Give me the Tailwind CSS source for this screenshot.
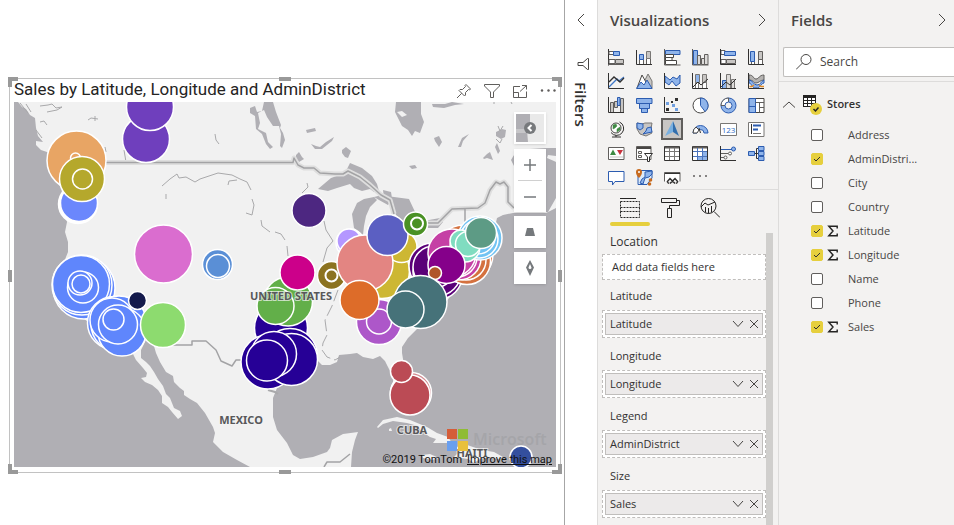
<!DOCTYPE html>
<html lang="en">
<head>
<meta charset="utf-8">
<meta name="viewport" content="width=device-width, initial-scale=1">
<title>Sales report</title>
<script src="https://cdn.jsdelivr.net/npm/@tailwindcss/browser@4"></script>
</head>
<body class="flex h-screen overflow-hidden bg-white font-['Open_Sans','Noto_Sans',sans-serif] text-xs text-[#323130]">

<svg class="absolute h-0 w-0" aria-hidden="true">
  <symbol id="down" viewBox="0 0 16 16"><path d="M3 5 8 10.500 13 5" fill="none" stroke="#484644"/></symbol>
  <symbol id="close" viewBox="0 0 16 16"><path d="M4 4 12 12M12 4 4 12" fill="none" stroke="#484644"/></symbol>
  <symbol id="tick" viewBox="0 0 12 12"><path d="M3 6 5 8 9 4" fill="none" stroke="#323130"/></symbol>
  <symbol id="sigma" viewBox="0 0 10 10"><path d="M8.500 3V1H1.500L5 5 1.500 9H8.500V7" fill="none" stroke="#252423" stroke-width="1.200"/></symbol>
</svg>

<main class="min-w-0 flex-1 border-r border-[#a6a6a6] pt-[78px] pr-[3px] pl-[9px]">
  <section class="relative border border-[#c2c2c2] px-1 pb-[5px]">
    <span class="absolute -top-0.5 -left-0.5 h-2.5 w-2.5 border-t-4 border-l-4 border-[#999]"></span>
    <span class="absolute -top-0.5 -right-0.5 h-2.5 w-2.5 border-t-4 border-r-4 border-[#999]"></span>
    <span class="absolute -bottom-0.5 -left-0.5 h-2.5 w-2.5 border-b-4 border-l-4 border-[#999]"></span>
    <span class="absolute -right-0.5 -bottom-0.5 h-2.5 w-2.5 border-r-4 border-b-4 border-[#999]"></span>
    <span class="absolute -top-0.5 left-1/2 h-1 w-3 -translate-x-1/2 bg-[#999]"></span>
    <span class="absolute -bottom-0.5 left-1/2 h-1 w-3 -translate-x-1/2 bg-[#999]"></span>
    <span class="absolute top-1/2 -left-0.5 h-3 w-1 -translate-y-1/2 bg-[#999]"></span>
    <span class="absolute top-1/2 -right-0.5 h-3 w-1 -translate-y-1/2 bg-[#999]"></span>

    <header class="flex h-[23px] items-center">
      <h1 class="min-w-0 flex-1 truncate pb-1 font-[Roboto,sans-serif] text-[17px] leading-5 text-[#252423]">Sales by Latitude, Longitude and AdminDistrict</h1>
      <div class="flex items-center gap-3 text-[#605e5c]">
        <button aria-label="Pin visual" class="block"><svg class="h-4 w-4" viewBox="0 0 16 16" fill="none" stroke="currentColor"><path d="M10 1.500 14.500 6 13.500 7 12.500 6.500 9.500 9.500 9.500 12 8.500 13 3 7.500 4 6.500 6.500 6.500 9.500 3.500 9 2.500ZM5.700 10.300 1 15"/></svg></button>
        <button aria-label="Filters on visual" class="block"><svg class="h-4 w-4" viewBox="0 0 16 16" fill="none" stroke="currentColor"><path d="M.5 1.500H15.500V3L9.500 9V14.500H6.500V9L.5 3Z"/></svg></button>
        <button aria-label="Focus mode" class="block"><svg class="h-4 w-4" viewBox="0 0 16 16" fill="none" stroke="currentColor"><path d="M8 3.500H1.500V14.500H14.500V8.500M1.500 9.500H6.500V14.500M10 2.500H14.500V6.500M14.500 2.500 8 8.500"/></svg></button>
        <button aria-label="More options" class="block"><svg class="h-4 w-4" viewBox="0 0 16 16" fill="currentColor"><circle cx="2" cy="7.500" r="1.200"/><circle cx="8.500" cy="7.500" r="1.200"/><circle cx="14.500" cy="7.500" r="1.200"/></svg></button>
      </div>
    </header>

    <div class="relative">
      <svg class="block w-full" viewBox="14 102 542 365" role="img" aria-label="Map of sales in North America">
        <rect x="14" y="102" width="542" height="365" fill="#f1f1f1"/>
        <g fill="#b0afb4">
          <path d="M14 102H18L22 107 26 109 30 115 35 118 36 128 38 136 43 142 36 141 36 145 41 150 47 152 60 164 62 195 67 222 65 232 68 242 68 252 64 262 60 290 80 316 120 345 133 354 136 360 143 368 147 373 146 377 141 378 145 382 152 385 158 390 162 396 162 403 168 407 172 412 178 419 182 416 180 411 174 408 170 398 166 394 163 386 158 379 154 372 150 366 146 362 141 358 141 350 146 340 154 346 156 353 160 362 166 372 173 376 174 382 180 388 184 391 184 395 190 399 197 403 205 413 213 427 215 433 213 442 223 452 237 460 250 467H14Z"/>
          <path d="M277 388 291 375 317 360 322 365 330 365 337 362 339 355 350 354 357 353 363 357 373 359 380 356 385 361 388 367 392 375 396 395 410 413 416 410 414 392 404 365 402 353 402 347 408 338 417 329 440 310 455 290 470 275 486 262 492 240 497 218 503 215 513 213 546 213 556 208V467H351L352 452 355 440 358 432 343 434 332 440 330 448 327 452 313 457 300 459 293 455 287 443 277 430 273 417 273 398Z"/>
          <path d="M514 150 546 148H556V156L548 155 547 158 554 161 556 162V198L548 212H514ZM511 160 514 155V166Z"/>
          <path d="M250 108 255 106 257 112 262 111 264 102H273L276 112 281 125 280 128 283 133 285 140 282 148 280 146 281 134 279 126 273 126 267 117 264 110 258 113 260 123 258 129 266 133 268 142 273 147 270 149 266 144 262 134 256 129 255 116 250 113Z"/>
          <path d="M306 130 315 128 316 131 307 133ZM311 144 316 146 320 147 326 142 334 137 332 141 322 149 315 149ZM342 150 346 147 351 151 348 158 345 157 342 153ZM296 155 299 152 302 157 304 159 299 162 296 159Z"/>
          <path d="M318 189 331 178 345 173 350 163 362 168 372 176 377 184 379 191 374 192 370 189 362 191 354 188 350 184 337 188 328 191ZM352 214 357 203 364 199 374 197 377 200 370 207 366 216 364 226 363 235 354 228ZM374 197 382 195 394 197 409 199 416 214 404 222 396 215 392 200 388 205 379 200ZM383 190 391 192 392 198 384 198ZM424 223 429 220 440 218 443 222 438 228 428 228ZM400 208 406 211 409 224 402 220Z"/>
          <path d="M396 102H421V114L424 122 420 133 415 131 412 136 408 130 402 126 395 112ZM432 104 445 104 452 102 464 104 455 105 444 108 433 107ZM458 147 462 138 469 134 463 141 461 147ZM496 132 502 129 506 130 505 137 501 139 496 136ZM495 147 497 143 500 151 498 154ZM483 158 487 154 490 152 493 160 487 158 484 159ZM409 166 415 165 417 168 412 169ZM434 138 439 136 442 142 439 147 435 141Z"/>
        </g>
        <path d="M397 112 402 111 407 115 402 117Z" fill="#f1f1f1"/>
        <g fill="#f1f1f1">
          <path d="M377 427 383 420 397 417 410 420 427 427 437 433 448 437 452 443 433 443 436 439 430 437 421 431 418 426 407 423 393 421 383 424 378 428ZM389 429 391 428 392 431 389 431ZM456 448 462 443 470 446 482 450 494 452 503 457 498 459 489 457 480 459 474 463 468 459 454 457 458 453ZM422 455 430 454 439 458 432 460 423 458Z"/>
        </g>
        <g fill="none" stroke="#a9a9ab" stroke-width="1">
          <path d="M40 106 48 105 52 104 56 108 62 107 57 110 47 112M40 122 44 121 47 125M36 130 42 138M88 120 91 118 98 119M95 116 95 121M124 150 126 162M105 147 106 152M162 186 170 179 177 174 179 178 186 177 195 182 200 179 206 177 218 173 232 175 240 179 247 182 251 190M228 185 229 181 237 180M166 194 166 199M252 199 254 205 252 215 246 213M261 220 262 226 270 232M275 232 281 234 285 240M287 246 288 256M307 183 308 187 302 193M324 221 326 230 333 241 327 248 323 262M215 134 216 140 219 144M20 103 28 113M26 104 31 112M498 126 500 131 503 126M496 139 500 143 502 139M494 102V104M511 102 512 104"/>
          <path d="M338 290 332 306 325 320 327 335 323 343 322 350 327 357 335 360 340 357" stroke-dasharray="12 4"/>
          <path d="M268 390 275 392 278 394" stroke-width="2"/>
        </g>
        <g fill="none" stroke-linejoin="round">
          <path stroke="#dedede" stroke-width="5" d="M100 162.500H293L294 158 298 165 304 168 314 168 320 173 335 174 343 174 348 171 360 177 370 185 381 195 390 200 394 214M428 223H438L452 209 478 208 485 203 490 190 496 182 500 184 504 182 508 187 508 202 514 208"/>
          <g stroke="#a3a3a5" stroke-width="1.500">
            <path d="M100 162.500H293L294 158 298 165 304 168 314 168 320 173 335 174 343 174 348 171 360 177 370 185 381 195 390 200 394 214M428 223H438L452 209 478 208 485 203 490 190 496 182 500 184 504 182 508 187 508 202 514 208M465 209V222"/>
            <path d="M170 345H192V341H206L216 350 221 361 232 366 236 360H242M324 467 327 462 340 462 350 454"/>
          </g>
        </g>

        <g stroke="#fff" stroke-width="1.500">
          <circle cx="146" cy="139" r="23.500" fill="#6f3fbd"/>
          <circle cx="150" cy="107" r="23.500" fill="#6f3fbd"/>
          <circle cx="78" cy="204" r="19.500" fill="#fff"/>
          <circle cx="79" cy="203" r="18.500" fill="#6b87fc"/>
          <circle cx="76.500" cy="160.500" r="29.500" fill="#e8a564"/>
          <circle cx="75.500" cy="158" r="5" fill="#e8a564"/>
          <circle cx="82" cy="179" r="22.500" fill="#b5a82c"/>
          <circle cx="82.500" cy="179" r="10" fill="#b5a82c"/>
          <circle cx="163.500" cy="254" r="29" fill="#da6dcf"/>
          <g fill="#5f86fc">
            <circle cx="84" cy="288" r="31"/><circle cx="82" cy="285" r="30"/><circle cx="81" cy="284" r="28.500"/>
            <circle cx="83" cy="287.500" r="15.500"/><circle cx="80" cy="283" r="12"/><circle cx="81" cy="284" r="9"/>
            <circle cx="114" cy="323" r="26.500"/><circle cx="119" cy="324" r="28"/><circle cx="122" cy="332" r="24"/><circle cx="112" cy="320" r="22"/>
            <circle cx="118" cy="324.500" r="19.500"/><circle cx="113.500" cy="319.500" r="10.500"/>
          </g>
          <circle cx="137.500" cy="300.500" r="9" fill="#141a4c"/>
          <circle cx="163" cy="325" r="22.500" fill="#8ddb6f"/>
          <circle cx="217.500" cy="264.500" r="15" fill="#5a8fd6"/>
          <circle cx="218" cy="266" r="11.500" fill="#5a8fd6"/>
          <circle cx="309" cy="210.500" r="17" fill="#4d2781"/>
          <g fill="#260096">
            <circle cx="281" cy="328" r="26.500"/><circle cx="290" cy="356" r="27.500"/><circle cx="268" cy="362" r="27"/><circle cx="291.500" cy="359.500" r="26"/>
            <circle cx="274" cy="354" r="22.500"/><circle cx="267" cy="360.500" r="20.500"/>
          </g>
          <circle cx="288" cy="301.500" r="24.500" fill="#62af49"/>
          <circle cx="275.500" cy="306" r="18.500" fill="#62af49"/>
          <circle cx="297.500" cy="272.500" r="17.500" fill="#cc008a"/>
          <circle cx="331.500" cy="275.500" r="14" fill="#8c7320"/>
          <circle cx="331.500" cy="275.500" r="6" fill="#8c7320" stroke-width="2"/>
          <circle cx="350" cy="243" r="14" fill="#d5c5ff"/>
          <circle cx="349" cy="241" r="12" fill="#b497ff"/>
          <circle cx="382" cy="271" r="27.500" fill="#cdb733"/>
          <circle cx="401.500" cy="247" r="15.500" fill="#cdb733"/>
          <circle cx="365" cy="263" r="28" fill="#e38582"/>
          <circle cx="387.500" cy="235" r="20.500" fill="#5b5fc2"/>
          <circle cx="415.500" cy="224" r="12" fill="#4a9125"/>
          <circle cx="417" cy="223.500" r="6" fill="#4a9125" stroke-width="2"/>
          <g fill="#5a0078">
            <circle cx="432" cy="266" r="23"/><circle cx="439" cy="276" r="23"/><circle cx="437" cy="272" r="24"/><circle cx="434" cy="267" r="21"/>
          </g>
          <g fill="#d4713f">
            <circle cx="464" cy="254" r="29"/><circle cx="467" cy="261" r="23.500"/><circle cx="466" cy="260" r="20"/>
          </g>
          <g fill="#c540a5">
            <circle cx="459" cy="258" r="22"/><circle cx="457" cy="257" r="20"/><circle cx="452" cy="253" r="24"/>
          </g>
          <g fill="#72c3f3">
            <circle cx="480" cy="238" r="22"/><circle cx="479" cy="239" r="19"/><circle cx="478" cy="237" r="17"/>
          </g>
          <g fill="#80dcc0">
            <circle cx="465" cy="247" r="15"/><circle cx="461" cy="241" r="11"/><circle cx="468" cy="244" r="12.500"/>
          </g>
          <circle cx="481" cy="233" r="15.500" fill="#5d9b85"/>
          <circle cx="446.500" cy="265" r="18.500" fill="#85008a"/>
          <circle cx="435" cy="273" r="6.500" fill="#b0562a"/>
          <circle cx="379" cy="322" r="22.500" fill="#ad57c9"/>
          <circle cx="379" cy="321.500" r="12.500" fill="#ad57c9"/>
          <circle cx="359.500" cy="300" r="19.500" fill="#dd6c29"/>
          <circle cx="420.500" cy="302" r="26.500" fill="#467279"/>
          <circle cx="405.500" cy="309.500" r="18.500" fill="#467279"/>
          <circle cx="411" cy="393" r="20.500" fill="#d48a91"/>
          <circle cx="410" cy="395" r="20" fill="#bb4b55"/>
          <circle cx="401.500" cy="371.500" r="11" fill="#bb4b55"/>
          <circle cx="521" cy="457" r="11" fill="#344f9e"/>
        </g>

        <g class="font-['Noto_Sans','Open_Sans',sans-serif] font-bold" font-size="11" fill="#58585a" stroke="#f4f4f4" stroke-opacity="0.7" stroke-width="2" paint-order="stroke" text-anchor="middle">
          <text x="291" y="300">UNITED STATES</text>
          <text x="241" y="424">MEXICO</text>
          <text x="412" y="434">CUBA</text>
          <text x="472" y="457">HAITI</text>
        </g>
        <path d="M447 429H457V439H447Z" fill="#d55c38"/><path d="M458 429H468V439H458Z" fill="#8fbc34"/>
        <path d="M447 441H457V451H447Z" fill="#699ff0"/><path d="M458 441H468V451H458Z" fill="#e9c03c"/>
        <text x="473" y="445" class="font-['Open_Sans',sans-serif] font-semibold" font-size="16" fill="#a5a5a9">Microsoft</text>
      </svg>

      <div class="absolute top-2.5 right-2.5 flex w-8 flex-col gap-1 text-[#75797c]">
        <button aria-label="Map style" class="mb-px h-8 border-2 border-white bg-[#e9e9e9] shadow">
          <svg class="h-full w-full" viewBox="0 0 28 28"><path d="M0 0H14V10L11 16 12 28H0Z" fill="#b0afb4"/><path d="M0 16H12M0 18H12" stroke="#ddd"/><circle cx="14" cy="14" r="6" fill="#77797c"/><path d="M15.500 11 12.500 14 15.500 17" fill="none" stroke="#fff" stroke-width="2"/></svg>
        </button>
        <div class="bg-white shadow">
          <button aria-label="Zoom in" class="flex h-[31px] w-full items-center justify-center"><svg class="h-4 w-4" viewBox="0 0 16 16" stroke="currentColor" stroke-width="1.500"><path d="M2 8H14M8 2V14"/></svg></button>
          <div class="mx-1 border-t border-[#d0d0d0]"></div>
          <button aria-label="Zoom out" class="flex h-[31px] w-full items-center justify-center"><svg class="h-4 w-4" viewBox="0 0 16 16" stroke="currentColor" stroke-width="1.500"><path d="M2 8H14"/></svg></button>
        </div>
        <button aria-label="Tilt map" class="flex h-8 items-center justify-center bg-white shadow"><svg class="h-4 w-4" viewBox="0 0 16 16" fill="currentColor"><path d="M5 4H11L13 12H3Z"/></svg></button>
        <button aria-label="Rotate map" class="flex h-8 items-center justify-center bg-white shadow"><svg class="h-4 w-4" viewBox="0 0 16 16" fill="currentColor"><path fill-rule="evenodd" d="M8 0 12 7.500 8 16 4 7.500ZM8 4 6.500 7.500A1.500 1.500 0 0 0 9.500 7.500Z"/></svg></button>
      </div>

      <p class="absolute right-1 -bottom-px font-[Roboto,sans-serif] text-[11px] leading-4 text-[#111]">©2019 TomTom <a href="#" class="ml-0.5 underline">Improve this map</a></p>
    </div>
  </section>
</main>

<aside aria-label="Filters" class="flex w-8 shrink-0 flex-col items-center">
  <button aria-label="Expand filters" class="mt-3"><svg class="h-4 w-4" viewBox="0 0 16 16" fill="none" stroke="#484644"><path d="M11 2 5 8 11 14"/></svg></button>
  <svg class="mt-7 ml-1 h-4 w-4" viewBox="0 0 16 16" fill="none" stroke="#484644"><path d="M13.500 2.500V13.500H12.500L8 9.500H3V6.500H8L12.500 2.500Z"/></svg>
  <h2 class="mt-2.5 text-[15px] leading-5 font-semibold [writing-mode:vertical-rl]">Filters</h2>
</aside>

<aside aria-label="Visualizations" class="flex w-[182px] shrink-0 flex-col border-x border-[#dddcdb] bg-[#f3f2f1]">
  <header class="flex h-10 shrink-0 items-center justify-between pr-2 pl-3">
    <h2 class="text-[15px] font-semibold text-[#484644]">Visualizations</h2>
    <button aria-label="Collapse visualizations"><svg class="h-4 w-4" viewBox="0 0 16 16" fill="none" stroke="#484644"><path d="M5 2 11 8 5 14"/></svg></button>
  </header>

  <div class="grid shrink-0 grid-cols-[repeat(6,28px)] auto-rows-[24px] border-b border-[#dddcdb] pt-[5px] pl-1">
    <button aria-label="Stacked bar chart" class="grid place-items-center"><svg width="17" height="17" viewBox="0 0 17 17" fill="none"><path d="M.5 0V16.500" stroke="#323130"/><path d="M1 2.500H6V5.500H1ZM1 10.500H7V14.500H1Z" fill="#fff" stroke="#605e5c"/><path d="M5.500 2.500H11.500V6.500H5.500Z" fill="#8fb4ea" stroke="#2c5cb0"/><path d="M7.500 10.500H15.500V14.500H7.500Z" fill="#c8c6c4" stroke="#605e5c"/><path d="M0 15.500H16" stroke="#605e5c"/></svg></button>
    <button aria-label="Stacked column chart" class="grid place-items-center"><svg width="17" height="17" viewBox="0 0 17 17"><path d="M3.500 10.500H7.500V15.500H3.500ZM10.500 9.500H14.500V15.500H10.500Z" fill="#fff" stroke="#605e5c"/><path d="M3.500 5.500H7.500V10.500H3.500Z" fill="#8fb4ea" stroke="#2c5cb0"/><path d="M10.500 2.500H14.500V9.500H10.500Z" fill="#c8c6c4" stroke="#797775"/><path d="M.5 1V15.500H16" fill="none" stroke="#323130"/></svg></button>
    <button aria-label="Clustered bar chart" class="grid place-items-center"><svg width="17" height="17" viewBox="0 0 17 17"><path d="M1.500 1.500H16V5.500H1.500Z" fill="#8fb4ea" stroke="#2c5cb0"/><path d="M1.500 5.500H9.500V8.500H1.500ZM1.500 8.500H8V11.500H1.500ZM1.500 11.500H12.500V15.500H1.500Z" fill="#fff" stroke="#484644"/><path d="M.5 0V16H16.500" fill="none" stroke="#605e5c"/></svg></button>
    <button aria-label="Clustered column chart" class="grid place-items-center"><svg width="17" height="17" viewBox="0 0 17 17"><path d="M1.500 1.500H5.500V15.500H1.500Z" fill="#8fb4ea" stroke="#2c5cb0"/><path d="M5.500 6.500H8.500V15.500H5.500ZM9.500 9.500H12.500V15.500H9.500ZM12.500 5.500H16V15.500H12.500Z" fill="#dddbd9" stroke="#605e5c"/><path d="M.5 0V16H16.500" fill="none" stroke="#605e5c"/></svg></button>
    <button aria-label="100% stacked bar chart" class="grid place-items-center"><svg width="17" height="17" viewBox="0 0 17 17"><path d="M1 1.500H5V5.500H1ZM1 10.500H6V14.500H1Z" fill="#fff" stroke="#605e5c"/><path d="M4.500 2.500H15.500V6.500H4.500Z" fill="#8fb4ea" stroke="#2c5cb0"/><path d="M6.500 10.500H15.500V14.500H6.500Z" fill="#c8c6c4" stroke="#605e5c"/><path d="M.5 0V15.500H16" fill="none" stroke="#323130"/></svg></button>
    <button aria-label="100% stacked column chart" class="grid place-items-center"><svg width="17" height="17" viewBox="0 0 17 17"><path d="M3.500 12.500H6.500V15.500H3.500ZM10.500 9.500H14.500V15.500H10.500Z" fill="#fff" stroke="#605e5c"/><path d="M2.500 2.500H6.500V12.500H2.500Z" fill="#8fb4ea" stroke="#2c5cb0"/><path d="M10.500 2.500H14.500V10.500H10.500Z" fill="#c8c6c4" stroke="#605e5c"/><path d="M.5 0V15.500H16" fill="none" stroke="#323130"/></svg></button>

    <button aria-label="Line chart" class="grid place-items-center"><svg width="17" height="17" viewBox="0 0 17 17" fill="none"><path d="M1 14 9 6 11 8 16 4" stroke="#3f78c8" stroke-width="1.300"/><path d="M1 9 6 4 12 9 16 5" stroke="#323130" stroke-width="1.300"/><path d="M.5 0V15.500H16" stroke="#323130"/></svg></button>
    <button aria-label="Area chart" class="grid place-items-center"><svg width="17" height="17" viewBox="0 0 17 17"><path d="M7 11 12 1 16 8V15.500Z" fill="#c8c6c4" stroke="#797775"/><path d="M1 15 6 2 11 11Z" fill="#fff" stroke="#484644"/><path d="M.5 15.500 5 9 8 12 11 7 16 15.500Z" fill="#8fb4ea" stroke="#2c5cb0"/></svg></button>
    <button aria-label="Stacked area chart" class="grid place-items-center"><svg width="17" height="17" viewBox="0 0 17 17"><path d="M1 3 6 7 9 4 13 6 16 2V10L12 13 8 8 5 12 1 9Z" fill="#8fb4ea" stroke="#2c5cb0"/><path d="M.5 0V15.500H16" fill="none" stroke="#323130"/></svg></button>
    <button aria-label="Line and stacked column chart" class="grid place-items-center"><svg width="17" height="17" viewBox="0 0 17 17"><path d="M3.500 9.500H6.500V15.500H3.500ZM10.500 9.500H14.500V15.500H10.500Z" fill="#fff" stroke="#797775"/><path d="M3.500 1.500H7.500V9.500H3.500Z" fill="#8fb4ea" stroke="#797775"/><path d="M10.500 1.500H14.500V9.500H10.500Z" fill="#c8c6c4" stroke="#797775"/><path d="M1 14 6 9 9 12 16 6M.5 0V15.500H16" fill="none" stroke="#323130"/></svg></button>
    <button aria-label="Line and clustered column chart" class="grid place-items-center"><svg width="17" height="17" viewBox="0 0 17 17"><path d="M2.500 7.500H6.500V15.500H2.500Z" fill="#8fb4ea" stroke="#2c5cb0"/><path d="M6.500 1.500H10.500V15.500H6.500ZM11.500 6.500H14.500V15.500H11.500Z" fill="#dddbd9" stroke="#797775"/><path d="M1 14 6 9 10 12 16 6M.5 0V15.500H16" fill="none" stroke="#323130"/></svg></button>
    <button aria-label="Ribbon chart" class="grid place-items-center"><svg width="17" height="17" viewBox="0 0 17 17"><path d="M1 2C6 2 5 6 8 6S11 2 16 2V7C12 7 11 10 8 10S6 7 1 7Z" fill="#b5b3b1" stroke="#605e5c"/><path d="M1 7C5 7 5 12 9 12S13 8 16 7V10C12 11 13 15 8 15S4 10 1 10Z" fill="#8fb4ea" stroke="#2c5cb0"/><path d="M1.500 13.500H4L6 12M16 13.500H13L11 12" fill="none" stroke="#e08b2a" stroke-width="1.500"/><path d="M.5 0V15.500H16" fill="none" stroke="#323130"/></svg></button>

    <button aria-label="Waterfall chart" class="grid place-items-center"><svg width="17" height="17" viewBox="0 0 17 17"><path d="M2.500 5.500H5.500V15.500H2.500Z" fill="#c8c6c4" stroke="#605e5c"/><path d="M6.500 4.500H9.500V10.500H6.500ZM12.500 1.500H15.500V15.500H12.500Z" fill="#c8c6c4" stroke="#605e5c"/><path d="M9.500 .5H12V8.500H9.500Z" fill="#8fb4ea" stroke="#2c5cb0"/><path d="M.5 0V15.500H16" fill="none" stroke="#323130"/></svg></button>
    <button aria-label="Funnel" class="grid place-items-center"><svg width="17" height="17" viewBox="0 0 17 17" fill="#8fb4ea" stroke="#2c5cb0"><path d="M.5 1.500H16V6.500H.5ZM3.500 6.500H13.500V11.500H3.500ZM5.500 11.500H11.500V15.500H5.500Z"/></svg></button>
    <button aria-label="Scatter chart" class="grid place-items-center"><svg width="17" height="17" viewBox="0 0 17 17"><path d="M11 1H14V4H11ZM2 11H5V14H2ZM7 4H9V6H7Z" fill="#323130"/><path d="M2 5H5V8H2ZM8 7H11V10H8ZM11 11H14V14H11Z" fill="#6f9fe0"/><path d="M.5 0V15.500H16" fill="none" stroke="#323130"/></svg></button>
    <button aria-label="Pie chart" class="grid place-items-center"><svg width="17" height="17" viewBox="0 0 17 17"><circle cx="8.500" cy="8.500" r="7.500" fill="#fff" stroke="#484644"/><path d="M8.500 1A7.500 7.500 0 0 1 13 14.500L8.500 8.500Z" fill="#8fb4ea" stroke="#2c5cb0"/></svg></button>
    <button aria-label="Donut chart" class="grid place-items-center"><svg width="17" height="17" viewBox="0 0 17 17"><circle cx="8.500" cy="8.500" r="7.500" fill="#8fb4ea" stroke="#2c5cb0"/><path d="M8.500 1A7.500 7.500 0 0 0 1 8.500H5L8.500 5Z" fill="#fff" stroke="#605e5c"/><circle cx="8.500" cy="8.500" r="3.500" fill="#f3f2f1" stroke="#2c5cb0"/></svg></button>
    <button aria-label="Treemap" class="grid place-items-center"><svg width="17" height="17" viewBox="0 0 17 17"><path d="M1 1.500H16V15.500H1Z" fill="#fff" stroke="#484644"/><path d="M1 1.500H7.500V15.500H1Z" fill="#8fb4ea" stroke="#2c5cb0"/><path d="M1 9.500H7.500" stroke="#2c5cb0"/><path d="M7.500 5.500H16M11.500 5.500V15.500M11.500 10.500H16" stroke="#605e5c"/></svg></button>

    <button aria-label="Map" class="grid place-items-center"><svg width="17" height="17" viewBox="0 0 17 17" fill="none"><circle cx="8" cy="7" r="5" fill="#fff" stroke="#484644"/><path d="M5 4 8 3 9 5 7 7 5 8ZM9 8 12 6 12 9 9 11Z" fill="#3f8a43" stroke="#3f8a43" stroke-width=".5"/><path d="M11.500 1A7 7 0 1 1 3 11.500M8 14V16M4 16H13" stroke="#323130"/></svg></button>
    <button aria-label="Filled map" class="grid place-items-center"><svg width="17" height="17" viewBox="0 0 17 17"><path d="M1 2 6 3 9 2 16 2 15 8 16 12 10 15 4 13 1 8Z" fill="#c8c6c4" stroke="#797775"/><path d="M1 2 7 3 7 7 4 9 1 7ZM11 7 15 6 16 11 11 12 7 13 10 10Z" fill="#8fb4ea" stroke="#2c5cb0"/></svg></button>
    <button aria-label="ArcGIS map" class="grid h-[22px] w-[22px] place-items-center place-self-center border-2 border-[#605e5c] bg-[#c8c6c4]"><svg width="16" height="16" viewBox="0 0 16 16"><path d="M9 0 1 15 9 11Z" fill="#79b0e0"/><path d="M9 0 15 15 9 11Z" fill="#336fad"/></svg></button>
    <button aria-label="Gauge" class="grid place-items-center"><svg width="17" height="17" viewBox="0 0 17 17"><path d="M1 12A7.500 7.500 0 0 1 16 12H12A3.500 3.500 0 0 0 5 12Z" fill="#8fb4ea" stroke="#2c5cb0"/><path d="M1 12A7.500 7.500 0 0 1 4 6L7 9 5 12Z" fill="#fff" stroke="#484644"/><path d="M8.500 12 7 7" stroke="#323130"/></svg></button>
    <button aria-label="Card" class="grid place-items-center"><svg width="17" height="17" viewBox="0 0 17 17"><path d="M.5 2.500H16.500V14.500H.5Z" fill="#fff" stroke="#797775"/><text x="8.500" y="11.500" font-size="8" text-anchor="middle" fill="#2f6bc4">123</text></svg></button>
    <button aria-label="Multi-row card" class="grid place-items-center"><svg width="17" height="17" viewBox="0 0 17 17"><path d="M.5 1.500H16V15.500H.5Z" fill="#fff" stroke="#797775"/><path d="M3.500 3V13" stroke="#323130"/><path d="M5 4.500H13M5 8.500H10" stroke="#2c5cb0" stroke-width="2"/><path d="M5 12.500H13" stroke="#797775"/></svg></button>

    <button aria-label="KPI" class="grid place-items-center"><svg width="17" height="17" viewBox="0 0 17 17"><path d="M.5 2.500H16V14.500H.5Z" fill="#fff" stroke="#605e5c"/><path d="M2 10 5 4.500 8 10Z" fill="#3f8a43"/><path d="M9 5H15L12 10Z" fill="#c8323c"/><path d="M2 12H15" stroke="#c8c6c4"/></svg></button>
    <button aria-label="Slicer" class="grid place-items-center"><svg width="17" height="17" viewBox="0 0 17 17"><path d="M.5 1.500H15V14.500H.5Z" fill="#fff" stroke="#605e5c"/><path d="M1 3H15" stroke="#484644" stroke-width="2"/><path d="M2.500 6.500H5.500V8.500H2.500ZM2.500 10.500H5.500V12.500H2.500Z" fill="#fff" stroke="#605e5c"/><path d="M8.500 8.500H16.500L13.500 12V16.500H11.500V12Z" fill="#fff" stroke="#323130"/></svg></button>
    <button aria-label="Table" class="grid place-items-center"><svg width="17" height="17" viewBox="0 0 17 17"><path d="M.5 1.500H15.500V15.500H.5Z" fill="#fff" stroke="#323130"/><path d="M1 2.500H15" stroke="#605e5c" stroke-width="2"/><path d="M1 6.500H15M1 11.500H15M5.500 3V15M10.500 3V15" stroke="#797775"/></svg></button>
    <button aria-label="Matrix" class="grid place-items-center"><svg width="17" height="17" viewBox="0 0 17 17"><path d="M.5 1.500H15.500V15.500H.5Z" fill="#fff" stroke="#323130"/><path d="M11 6H15V15H6V11H11Z" fill="#8fb4ea"/><path d="M1 2.500H15" stroke="#605e5c" stroke-width="2"/><path d="M1 6.500H15M1 11.500H15M5.500 3V15M10.500 3V15" stroke="#4b74bd"/></svg></button>
    <button aria-label="Key influencers" class="grid place-items-center"><svg width="17" height="17" viewBox="0 0 17 17" fill="#fff"><path d="M1 4.500H12" stroke="#2c5cb0"/><circle cx="13.500" cy="4" r="2" fill="#8fb4ea" stroke="#2c5cb0"/><path d="M1 8.500H8M1 12.500H4" stroke="#605e5c"/><circle cx="10" cy="8.500" r="1.500" stroke="#605e5c"/><circle cx="5.500" cy="12.500" r="1.500" stroke="#605e5c"/><path d="M.5 1V15.500H16" fill="none" stroke="#323130"/></svg></button>
    <button aria-label="Decomposition tree" class="grid place-items-center"><svg width="17" height="17" viewBox="0 0 17 17"><path d="M6 8.500H10M8.500 8V3.500H11M8.500 8V13.500H11" fill="none" stroke="#323130"/><path d="M.5 6.500H6.500V10.500H.5ZM10.500 1.500H16V5.500H10.500ZM10.500 6.500H16V10.500H10.500ZM10.500 11.500H16V15.500H10.500Z" fill="#8fb4ea" stroke="#2c5cb0"/></svg></button>

    <button aria-label="Q&amp;A" class="grid place-items-center"><svg width="17" height="17" viewBox="0 0 17 17"><path d="M.5 2.500H16V12.500H7L4.500 16V12.500H.5Z" fill="#fff" stroke="#2c5cb0"/></svg></button>
    <button aria-label="Shape map" class="grid place-items-center"><svg width="17" height="17" viewBox="0 0 17 17"><path d="M2 1.500H16V9L11 15.500H2Z" fill="#dceafa" stroke="#2c5cb0"/><path d="M9 3 16 2V5L13 8 9 9 7 15 4 14 6 10 9 8Z" fill="#8fb4ea" stroke="#2c5cb0"/><path d="M3 9C0 6 0 4 0 3A3 3 0 0 1 6 3C6 5 5 7 3 9Z" fill="#c86b1f"/><circle cx="3" cy="3" r="1" fill="#fff"/><circle cx="14.500" cy="11" r="1.800" fill="#c86b1f"/><circle cx="13.500" cy="15" r="1.800" fill="#c86b1f"/></svg></button>
    <button aria-label="Python visual" class="grid place-items-center"><svg width="17" height="17" viewBox="0 0 17 17" fill="none" stroke="#323130"><path d="M.5 12.500V3.500H16V12.500" fill="#fff" stroke="#605e5c"/><path d="M1 4.500H16"/><path d="M3 13 6 9.500 11 14.500M6 14.500 11 9.500 14 13M3 13 5 14.500M14 13 12 14.500" stroke-width="1.500"/></svg></button>
    <button aria-label="Get more visuals" class="grid place-items-center"><svg width="17" height="17" viewBox="0 0 17 17" fill="#605e5c"><circle cx="2" cy="7" r="1"/><circle cx="8" cy="7" r="1"/><circle cx="14" cy="7" r="1"/></svg></button>
  </div>

  <nav class="flex h-[43px] shrink-0 pl-3 text-[#252423]">
    <button aria-label="Fields tab" class="flex w-10 flex-col items-center pt-2">
      <svg class="h-5 w-5" viewBox="0 0 20 20" fill="none" stroke="currentColor"><path d="M0 .5H16"/><path d="M.5 3.500H19.500V9.500H.5ZM.5 13.500H19.500V19.500H.5ZM.5 9.500V13.500M19.500 9.500V13.500" stroke-dasharray="2 1"/></svg>
      <span class="mt-1 h-1 w-full rounded-full bg-[#e6cf3d]"></span>
    </button>
    <button aria-label="Format tab" class="flex w-10 flex-col items-center pt-2"><svg class="h-5 w-5" viewBox="0 0 20 20" fill="none" stroke="currentColor"><path d="M1.500 .5H16.500V4.500H1.500ZM16.500 2.500H19.500V7.500H9.500V10.500M7.500 10.500H11.500V19.500H7.500Z"/></svg></button>
    <button aria-label="Analytics tab" class="flex w-10 flex-col items-center pt-2"><svg class="h-5 w-5" viewBox="0 0 20 20" fill="none" stroke="currentColor"><circle cx="8.500" cy="8" r="7.500"/><path d="M14 13.500 20 19.500M1 9 5 5 8 7 15 4M5.500 9V14.500M8.500 10V15.500M11.500 8V14.500"/></svg></button>
  </nav>

  <div class="flex min-h-0 flex-1">
    <div class="min-w-0 flex-1 overflow-hidden pl-1 text-[11px]">
      <h3 class="h-[21px] pl-2 text-xs leading-[18px]">Location</h3>
      <div class="border border-dashed border-[#c0bebc] bg-white px-[9px] leading-6">Add data fields here</div>
      <h3 class="h-[30px] pt-0.5 pl-2 leading-7">Latitude</h3>
      <div class="border border-dashed border-[#c0bebc] bg-white p-0.5"><div class="flex items-center border border-[#c0bebc] bg-[#eceaea] pl-1 leading-5">
        <span class="flex-1">Latitude</span>
        <button aria-label="Latitude options"><svg class="h-4 w-4"><use href="#down"/></svg></button>
        <button aria-label="Remove Latitude"><svg class="h-4 w-4"><use href="#close"/></svg></button>
      </div></div>
      <h3 class="h-8 pt-1 pl-2 leading-7">Longitude</h3>
      <div class="border border-dashed border-[#c0bebc] bg-white p-0.5"><div class="flex items-center border border-[#c0bebc] bg-[#eceaea] pl-1 leading-5">
        <span class="flex-1">Longitude</span>
        <button aria-label="Longitude options"><svg class="h-4 w-4"><use href="#down"/></svg></button>
        <button aria-label="Remove Longitude"><svg class="h-4 w-4"><use href="#close"/></svg></button>
      </div></div>
      <h3 class="h-8 pt-1 pl-2 leading-7">Legend</h3>
      <div class="border border-dashed border-[#c0bebc] bg-white p-0.5"><div class="flex items-center border border-[#c0bebc] bg-[#eceaea] pl-1 leading-5">
        <span class="flex-1">AdminDistrict</span>
        <button aria-label="AdminDistrict options"><svg class="h-4 w-4"><use href="#down"/></svg></button>
        <button aria-label="Remove AdminDistrict"><svg class="h-4 w-4"><use href="#close"/></svg></button>
      </div></div>
      <h3 class="h-8 pt-1 pl-2 leading-7">Size</h3>
      <div class="border border-dashed border-[#c0bebc] bg-white p-0.5"><div class="flex items-center border border-[#c0bebc] bg-[#eceaea] pl-1 leading-5">
        <span class="flex-1">Sales</span>
        <button aria-label="Sales options"><svg class="h-4 w-4"><use href="#down"/></svg></button>
        <button aria-label="Remove Sales"><svg class="h-4 w-4"><use href="#close"/></svg></button>
      </div></div>
    </div>
    <div class="mr-[5px] w-[7px] bg-[#d0cfcd]"></div>
  </div>
</aside>

<aside aria-label="Fields" class="flex w-[175px] shrink-0 flex-col bg-[#f3f2f1]">
  <header class="flex h-10 items-center justify-between pr-1 pl-3">
    <h2 class="text-[15px] font-semibold text-[#484644]">Fields</h2>
    <button aria-label="Collapse fields"><svg class="h-4 w-4" viewBox="0 0 16 16" fill="none" stroke="#484644"><path d="M5 2 11 8 5 14"/></svg></button>
  </header>
  <div class="border-b border-[#dddcdb] pt-[7px] pb-1 pl-1">
    <label class="flex h-[30px] items-center rounded-l-xs border border-r-0 border-[#c0bebc] bg-white pl-3">
      <svg class="h-4 w-4 shrink-0" viewBox="0 0 16 16" fill="none" stroke="#484644"><circle cx="10" cy="5.500" r="5"/><path d="M6.500 9 0 15.500"/></svg>
      <input type="text" placeholder="Search" aria-label="Search" class="ml-2 min-w-0 flex-1 outline-none placeholder:text-[#484644]">
    </label>
  </div>
  <div class="flex h-[41px] items-center pt-1 pl-1">
    <button aria-label="Collapse Stores" class="mr-1"><svg class="h-4 w-4" viewBox="0 0 16 16" fill="none" stroke="#484644"><path d="M0 10.500 6 5 12 10.500"/></svg></button>
    <svg class="h-5 w-5" viewBox="0 0 20 20"><path d="M-.5 .5H12.500V11.500H-.5Z" fill="#fff" stroke="#252423"/><path d="M0 1.500H13" stroke="#252423" stroke-width="3"/><path d="M0 5.500H13M0 8.500H13M.5 0V12M4.500 2V12M8.500 2V12" stroke="#252423"/><circle cx="13" cy="14" r="6" fill="#e6cf3d"/><path d="M10.500 14 12.500 16 15.500 12.500" fill="none" stroke="#252423" stroke-width="1.500"/></svg>
    <h3 class="ml-1 text-[11px] font-semibold">Stores</h3>
  </div>
  <ul class="text-[11px] text-[#484644]">
    <li><label class="flex h-6 items-center pl-8"><span class="relative h-3 w-3"><input type="checkbox" class="peer block h-3 w-3 appearance-none rounded-xs border border-[#605e5c] bg-white checked:border-[#e6cf3d] checked:bg-[#e6cf3d]"><svg class="pointer-events-none absolute inset-0 hidden h-3 w-3 peer-checked:block"><use href="#tick"/></svg></span><span class="ml-1 w-5"></span><span class="ml-px">Address</span></label></li>
    <li><label class="flex h-6 items-center pl-8"><span class="relative h-3 w-3"><input type="checkbox" checked class="peer block h-3 w-3 appearance-none rounded-xs border border-[#605e5c] bg-white checked:border-[#e6cf3d] checked:bg-[#e6cf3d]"><svg class="pointer-events-none absolute inset-0 hidden h-3 w-3 peer-checked:block"><use href="#tick"/></svg></span><span class="ml-1 w-5"></span><span class="ml-px">AdminDistri...</span></label></li>
    <li><label class="flex h-6 items-center pl-8"><span class="relative h-3 w-3"><input type="checkbox" class="peer block h-3 w-3 appearance-none rounded-xs border border-[#605e5c] bg-white checked:border-[#e6cf3d] checked:bg-[#e6cf3d]"><svg class="pointer-events-none absolute inset-0 hidden h-3 w-3 peer-checked:block"><use href="#tick"/></svg></span><span class="ml-1 w-5"></span><span class="ml-px">City</span></label></li>
    <li><label class="flex h-6 items-center pl-8"><span class="relative h-3 w-3"><input type="checkbox" class="peer block h-3 w-3 appearance-none rounded-xs border border-[#605e5c] bg-white checked:border-[#e6cf3d] checked:bg-[#e6cf3d]"><svg class="pointer-events-none absolute inset-0 hidden h-3 w-3 peer-checked:block"><use href="#tick"/></svg></span><span class="ml-1 w-5"></span><span class="ml-px">Country</span></label></li>
    <li><label class="flex h-6 items-center pl-8"><span class="relative h-3 w-3"><input type="checkbox" checked class="peer block h-3 w-3 appearance-none rounded-xs border border-[#605e5c] bg-white checked:border-[#e6cf3d] checked:bg-[#e6cf3d]"><svg class="pointer-events-none absolute inset-0 hidden h-3 w-3 peer-checked:block"><use href="#tick"/></svg></span><span class="ml-1 w-5"><svg class="h-3 w-3"><use href="#sigma"/></svg></span><span class="ml-px">Latitude</span></label></li>
    <li><label class="flex h-6 items-center pl-8"><span class="relative h-3 w-3"><input type="checkbox" checked class="peer block h-3 w-3 appearance-none rounded-xs border border-[#605e5c] bg-white checked:border-[#e6cf3d] checked:bg-[#e6cf3d]"><svg class="pointer-events-none absolute inset-0 hidden h-3 w-3 peer-checked:block"><use href="#tick"/></svg></span><span class="ml-1 w-5"><svg class="h-3 w-3"><use href="#sigma"/></svg></span><span class="ml-px">Longitude</span></label></li>
    <li><label class="flex h-6 items-center pl-8"><span class="relative h-3 w-3"><input type="checkbox" class="peer block h-3 w-3 appearance-none rounded-xs border border-[#605e5c] bg-white checked:border-[#e6cf3d] checked:bg-[#e6cf3d]"><svg class="pointer-events-none absolute inset-0 hidden h-3 w-3 peer-checked:block"><use href="#tick"/></svg></span><span class="ml-1 w-5"></span><span class="ml-px">Name</span></label></li>
    <li><label class="flex h-6 items-center pl-8"><span class="relative h-3 w-3"><input type="checkbox" class="peer block h-3 w-3 appearance-none rounded-xs border border-[#605e5c] bg-white checked:border-[#e6cf3d] checked:bg-[#e6cf3d]"><svg class="pointer-events-none absolute inset-0 hidden h-3 w-3 peer-checked:block"><use href="#tick"/></svg></span><span class="ml-1 w-5"></span><span class="ml-px">Phone</span></label></li>
    <li><label class="flex h-6 items-center pl-8"><span class="relative h-3 w-3"><input type="checkbox" checked class="peer block h-3 w-3 appearance-none rounded-xs border border-[#605e5c] bg-white checked:border-[#e6cf3d] checked:bg-[#e6cf3d]"><svg class="pointer-events-none absolute inset-0 hidden h-3 w-3 peer-checked:block"><use href="#tick"/></svg></span><span class="ml-1 w-5"><svg class="h-3 w-3"><use href="#sigma"/></svg></span><span class="ml-px">Sales</span></label></li>
  </ul>
</aside>
</body>
</html>
